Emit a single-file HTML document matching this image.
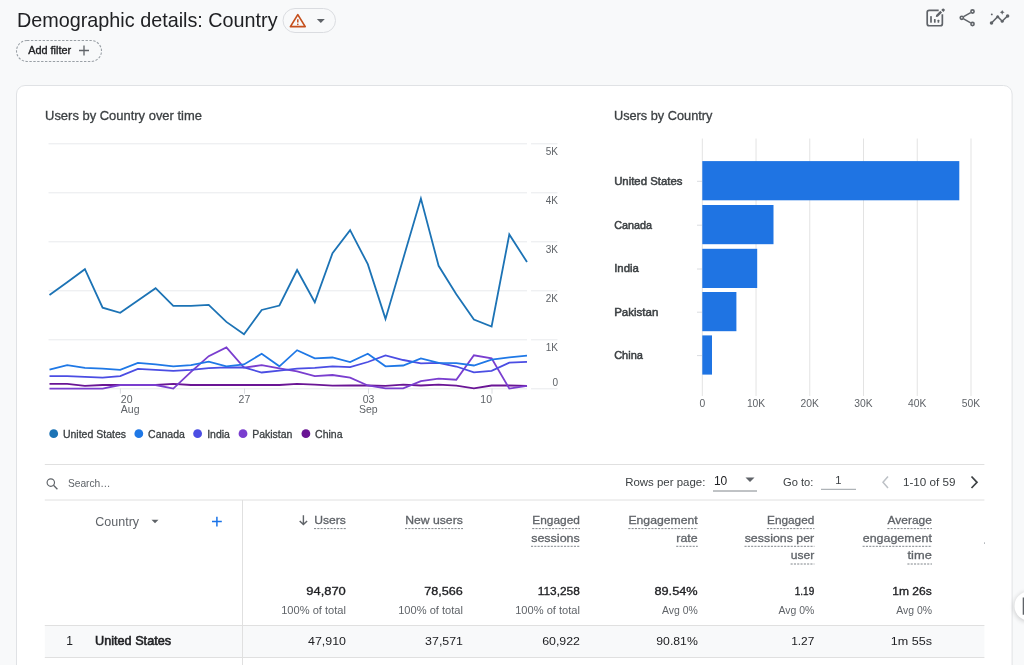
<!DOCTYPE html>
<html><head><meta charset="utf-8"><style>
html,body{margin:0;padding:0;width:1024px;height:665px;overflow:hidden;background:#f8f9fa;}
svg{display:block;font-family:"Liberation Sans",sans-serif;will-change:transform;}
</style></head><body>
<svg width="1024" height="665" viewBox="0 0 1024 665" font-family="Liberation Sans, sans-serif">
<rect x="16.5" y="85.5" width="995.6" height="620" rx="8.5" fill="#fff" stroke="#e0e2e5"/>
<text x="17.00" y="27.30" font-size="19.8" fill="#202124">Demographic details: Country</text>
<rect x="283" y="8.5" width="52.5" height="24" rx="12" fill="none" stroke="#dadce0"/>
<path d="M297.8 14.6 L305.2 26.6 L290.4 26.6 Z" fill="none" stroke="#c5501e" stroke-width="1.7" stroke-linejoin="round"/>
<path d="M297.8 19.2 V22.6" stroke="#c5501e" stroke-width="1.5"/><circle cx="297.8" cy="24.4" r="0.8" fill="#c5501e"/>
<path d="M316.8 19 H324.8 L320.8 23 Z" fill="#5f6368"/>
<rect x="16.5" y="40.5" width="85" height="21" rx="10.5" fill="none" stroke="#9aa0a6" stroke-width="1.1" stroke-dasharray="2.4 1.5"/>
<text x="28.18" y="54.20" font-size="10.6" fill="#202124" stroke="#202124" stroke-width="0.35" textLength="42.95" lengthAdjust="spacingAndGlyphs">Add filter</text>
<path d="M79 50.5 H89 M84 45.5 V55.5" stroke="#5f6368" stroke-width="1.3"/>
<g fill="none" stroke="#5f6368" stroke-width="1.7"><path d="M938.7 10.35 H929.2 A2 2 0 0 0 927.2 12.35 V23.75 A2 2 0 0 0 929.2 25.75 H940.35 A2 2 0 0 0 942.35 23.75 V14.2"/></g><g fill="#5f6368"><rect x="930.15" y="16.1" width="1.7" height="6.6" rx="0.4"/><rect x="933.95" y="18.9" width="1.7" height="3.8" rx="0.4"/><rect x="937.55" y="19.8" width="1.7" height="2.9" rx="0.4"/></g><path d="M935.8 17.1 L936.15 15.05 L940.35 10.85 L942.05 12.55 L937.85 16.75 Z M941.25 9.95 L942.45 8.75 Q943.2 8.1 943.95 8.75 L944.55 9.35 Q945.2 10.1 944.55 10.85 L943.35 12.05 Z" fill="#5f6368"/>
<g fill="none" stroke="#5f6368"><path d="M963.6 16.7 L970.7 12.6 M963.6 18.9 L970.7 22.9" stroke-width="1.5"/><circle cx="961.8" cy="17.8" r="1.6" stroke-width="1.6"/><circle cx="972.5" cy="11.5" r="1.6" stroke-width="1.6"/><circle cx="972.5" cy="24" r="1.6" stroke-width="1.6"/></g>
<g fill="#5f6368"><path d="M991.5 23 L997.7 16.65 L1002.2 21.2 L1007.6 15.9" fill="none" stroke="#5f6368" stroke-width="1.5"/><circle cx="991.5" cy="23" r="1.75"/><circle cx="997.7" cy="16.65" r="1.5"/><circle cx="1002.2" cy="21.2" r="1.5"/><circle cx="1007.6" cy="15.9" r="1.75"/><path d="M1002.2 9.9 Q1002.6 11.9 1004.6 12.3 Q1002.6 12.7 1002.2 14.7 Q1001.8 12.7 999.8 12.3 Q1001.8 11.9 1002.2 9.9 Z"/><circle cx="991.8" cy="14.4" r="0.95"/></g>
<text x="45.05" y="119.70" font-size="13" fill="#3c4043" stroke="#3c4043" stroke-width="0.3" textLength="156.90" lengthAdjust="spacingAndGlyphs">Users by Country over time</text>
<text x="613.95" y="119.60" font-size="13" fill="#3c4043" stroke="#3c4043" stroke-width="0.3" textLength="98.50" lengthAdjust="spacingAndGlyphs">Users by Country</text>
<path d="M48.5 143.80 H527 M531 143.80 H557.5" stroke="#e8eaed" stroke-width="1"/>
<text x="558.00" y="154.60" font-size="10" fill="#5f6368" text-anchor="end">5K</text>
<path d="M48.5 192.80 H527 M531 192.80 H557.5" stroke="#e8eaed" stroke-width="1"/>
<text x="558.00" y="203.60" font-size="10" fill="#5f6368" text-anchor="end">4K</text>
<path d="M48.5 241.80 H527 M531 241.80 H557.5" stroke="#e8eaed" stroke-width="1"/>
<text x="558.00" y="252.60" font-size="10" fill="#5f6368" text-anchor="end">3K</text>
<path d="M48.5 290.80 H527 M531 290.80 H557.5" stroke="#e8eaed" stroke-width="1"/>
<text x="558.00" y="301.60" font-size="10" fill="#5f6368" text-anchor="end">2K</text>
<path d="M48.5 339.80 H527 M531 339.80 H557.5" stroke="#e8eaed" stroke-width="1"/>
<text x="558.00" y="350.60" font-size="10" fill="#5f6368" text-anchor="end">1K</text>
<path d="M48.5 388.80 H527 M531 388.80 H557.5" stroke="#e8eaed" stroke-width="1"/>
<text x="558.00" y="385.50" font-size="10" fill="#5f6368" text-anchor="end">0</text>
<path d="M120.4 388.5 V393.7" stroke="#dadce0"/>
<path d="M244.5 388.5 V393.7" stroke="#dadce0"/>
<path d="M368.5 388.5 V393.7" stroke="#dadce0"/>
<path d="M492 388.5 V393.7" stroke="#dadce0"/>
<text x="120.80" y="402.90" font-size="10.5" fill="#5f6368">20</text>
<text x="120.80" y="413.40" font-size="10.5" fill="#5f6368">Aug</text>
<text x="244.40" y="402.90" font-size="10.5" fill="#5f6368" text-anchor="middle">27</text>
<text x="368.50" y="402.90" font-size="10.5" fill="#5f6368" text-anchor="middle">03</text>
<text x="368.30" y="413.40" font-size="10.5" fill="#5f6368" text-anchor="middle">Sep</text>
<text x="492.00" y="402.90" font-size="10.5" fill="#5f6368" text-anchor="end">10</text>
<polyline points="49.5,383.9 67.2,383.9 84.9,385.8 102.6,385.0 120.2,385.0 137.9,385.0 155.6,385.0 173.3,383.9 191.0,385.0 208.7,385.0 226.4,385.0 244.0,385.0 261.7,385.0 279.4,385.0 297.1,383.9 314.8,384.7 332.5,385.6 350.1,385.5 367.8,385.5 385.5,385.8 403.2,384.7 420.9,385.5 438.6,384.7 456.3,385.7 473.9,388.4 491.6,385.5 509.3,385.5 527.0,385.8" fill="none" stroke="#6a1595" stroke-width="1.8" stroke-miterlimit="8"/>
<polyline points="49.5,388.6 67.2,388.6 84.9,388.6 102.6,388.6 120.2,385.0 137.9,385.0 155.6,385.0 173.3,388.6 191.0,371.9 208.7,356.2 226.4,347.4 244.0,367.6 261.7,365.2 279.4,368.3 297.1,371.3 314.8,376.1 332.5,375.0 350.1,377.6 367.8,385.5 385.5,388.4 403.2,388.4 420.9,381.1 438.6,378.6 456.3,379.7 473.9,355.3 491.6,358.4 509.3,388.6 527.0,385.8" fill="none" stroke="#7a3ecf" stroke-width="1.8" stroke-miterlimit="8"/>
<polyline points="49.5,376.1 67.2,376.1 84.9,376.9 102.6,377.7 120.2,376.1 137.9,368.9 155.6,369.8 173.3,370.9 191.0,369.8 208.7,368.1 226.4,367.3 244.0,367.5 261.7,372.5 279.4,370.6 297.1,368.6 314.8,367.8 332.5,366.3 350.1,367.1 367.8,362.0 385.5,355.4 403.2,360.0 420.9,363.4 438.6,362.8 456.3,366.5 473.9,372.3 491.6,370.8 509.3,362.6 527.0,361.8" fill="none" stroke="#4b4de3" stroke-width="1.8" stroke-miterlimit="8"/>
<polyline points="49.5,369.7 67.2,365.2 84.9,367.8 102.6,368.6 120.2,369.8 137.9,362.8 155.6,364.4 173.3,366.3 191.0,365.2 208.7,361.6 226.4,366.3 244.0,364.4 261.7,353.8 279.4,366.3 297.1,350.2 314.8,358.4 332.5,357.5 350.1,362.0 367.8,353.8 385.5,366.3 403.2,365.5 420.9,358.4 438.6,362.8 456.3,363.1 473.9,365.5 491.6,359.7 509.3,357.3 527.0,355.6" fill="none" stroke="#1f78e6" stroke-width="1.8" stroke-miterlimit="8"/>
<polyline points="49.5,295.1 67.2,282.2 84.9,269.2 102.6,307.7 120.2,312.8 137.9,300.5 155.6,288.2 173.3,305.8 191.0,305.8 208.7,304.9 226.4,321.9 244.0,334.3 261.7,310.0 279.4,305.5 297.1,270.0 314.8,302.2 332.5,253.2 350.1,230.1 367.8,264.2 385.5,318.9 403.2,258.7 420.9,198.5 438.6,265.8 456.3,294.3 473.9,319.5 491.6,326.5 509.3,234.5 527.0,262.0" fill="none" stroke="#1c73b5" stroke-width="1.8" stroke-miterlimit="8"/>
<circle cx="53.7" cy="433.7" r="4.4" fill="#1c73b5"/>
<text x="62.95" y="437.90" font-size="10.5" fill="#3c4043" stroke="#3c4043" stroke-width="0.3">United States</text>
<circle cx="138.8" cy="433.7" r="4.4" fill="#1f78e6"/>
<text x="148.05" y="437.90" font-size="10.5" fill="#3c4043" stroke="#3c4043" stroke-width="0.3">Canada</text>
<circle cx="197.6" cy="433.7" r="4.4" fill="#4b4de3"/>
<text x="207.15" y="437.90" font-size="10.5" fill="#3c4043" stroke="#3c4043" stroke-width="0.3">India</text>
<circle cx="243" cy="433.7" r="4.4" fill="#7a3ecf"/>
<text x="252.15" y="437.90" font-size="10.5" fill="#3c4043" stroke="#3c4043" stroke-width="0.3">Pakistan</text>
<circle cx="305.9" cy="433.7" r="4.4" fill="#6a1595"/>
<text x="315.05" y="437.90" font-size="10.5" fill="#3c4043" stroke="#3c4043" stroke-width="0.3">China</text>
<path d="M702.30 138.5 V396" stroke="#e3e3e3"/>
<text x="702.30" y="407.00" font-size="10.3" fill="#5f6368" text-anchor="middle">0</text>
<path d="M756.04 138.5 V396" stroke="#e3e3e3"/>
<text x="756.04" y="407.00" font-size="10.3" fill="#5f6368" text-anchor="middle">10K</text>
<path d="M809.78 138.5 V396" stroke="#e3e3e3"/>
<text x="809.78" y="407.00" font-size="10.3" fill="#5f6368" text-anchor="middle">20K</text>
<path d="M863.52 138.5 V396" stroke="#e3e3e3"/>
<text x="863.52" y="407.00" font-size="10.3" fill="#5f6368" text-anchor="middle">30K</text>
<path d="M917.26 138.5 V396" stroke="#e3e3e3"/>
<text x="917.26" y="407.00" font-size="10.3" fill="#5f6368" text-anchor="middle">40K</text>
<path d="M971.00 138.5 V396" stroke="#e3e3e3"/>
<text x="971.00" y="407.00" font-size="10.3" fill="#5f6368" text-anchor="middle">50K</text>
<rect x="702.3" y="161.1" width="257.0" height="39.2" fill="#1f74e3"/>
<path d="M697 181.3 H702" stroke="#dadce0"/>
<text x="614.15" y="185.00" font-size="11.3" fill="#3c4043" stroke="#3c4043" stroke-width="0.5" textLength="68.30" lengthAdjust="spacingAndGlyphs">United States</text>
<rect x="702.3" y="205" width="71.2" height="39.2" fill="#1f74e3"/>
<path d="M697 225.2 H702" stroke="#dadce0"/>
<text x="614.15" y="228.55" font-size="11.3" fill="#3c4043" stroke="#3c4043" stroke-width="0.5" textLength="37.80" lengthAdjust="spacingAndGlyphs">Canada</text>
<rect x="702.3" y="248.8" width="54.9" height="39.2" fill="#1f74e3"/>
<path d="M697 269.0 H702" stroke="#dadce0"/>
<text x="614.15" y="272.10" font-size="11.3" fill="#3c4043" stroke="#3c4043" stroke-width="0.5" textLength="24.70" lengthAdjust="spacingAndGlyphs">India</text>
<rect x="702.3" y="292" width="34.1" height="39.2" fill="#1f74e3"/>
<path d="M697 312.2 H702" stroke="#dadce0"/>
<text x="614.15" y="315.65" font-size="11.3" fill="#3c4043" stroke="#3c4043" stroke-width="0.5" textLength="44.20" lengthAdjust="spacingAndGlyphs">Pakistan</text>
<rect x="702.3" y="335.4" width="9.7" height="39.2" fill="#1f74e3"/>
<path d="M697 355.6 H702" stroke="#dadce0"/>
<text x="614.15" y="359.20" font-size="11.3" fill="#3c4043" stroke="#3c4043" stroke-width="0.5" textLength="28.80" lengthAdjust="spacingAndGlyphs">China</text>
<path d="M44.8 464.5 H984.4 M44.8 500 H984.4" stroke="#e0e0e0"/>
<circle cx="50.8" cy="482.6" r="3.7" fill="none" stroke="#5f6368" stroke-width="1.15"/><path d="M53.5 485.3 L57.4 489.2" stroke="#5f6368" stroke-width="1.3"/>
<text x="67.90" y="487.20" font-size="11.5" fill="#5f6368" textLength="42.60" lengthAdjust="spacingAndGlyphs">Search…</text>
<text x="625.20" y="486.30" font-size="11.5" fill="#3c4043" textLength="80.20" lengthAdjust="spacingAndGlyphs">Rows per page:</text>
<text x="713.90" y="485.00" font-size="12" fill="#202124">10</text>
<path d="M713 491 H757" stroke="#80868b"/><path d="M745.5 477.5 H754.5 L750 482 Z" fill="#5f6368"/>
<text x="783.00" y="486.30" font-size="11.5" fill="#3c4043" textLength="30.40" lengthAdjust="spacingAndGlyphs">Go to:</text>
<path d="M821 489.3 H856" stroke="#9aa0a6"/>
<text x="838.40" y="484.40" font-size="11.2" fill="#3c4043" text-anchor="middle">1</text>
<path d="M888 476.5 L883 482.3 L888 488" fill="none" stroke="#bdc1c6" stroke-width="1.5"/>
<text x="903.00" y="486.30" font-size="11.7" fill="#3c4043" textLength="52.50" lengthAdjust="spacingAndGlyphs">1-10 of 59</text>
<path d="M971.5 476.5 L977 482.3 L971.5 488" fill="none" stroke="#3c4043" stroke-width="1.7"/>
<path d="M242.5 500 V665" stroke="#e0e0e0"/>
<text x="95.30" y="526.00" font-size="12.5" fill="#5f6368">Country</text>
<path d="M151.5 519.8 H158.5 L155 523.3 Z" fill="#5f6368"/>
<path d="M212 521.6 H221.8 M216.9 516.7 V526.5" stroke="#1a73e8" stroke-width="1.5"/>
<text x="345.85" y="523.80" font-size="11.7" fill="#5f6368" stroke="#5f6368" stroke-width="0.3" text-anchor="end" textLength="31.70" lengthAdjust="spacingAndGlyphs">Users</text>
<path d="M314.0 528.6 H346.0" stroke="#80868b" stroke-width="1" stroke-dasharray="2.1 1.2"/>
<text x="462.85" y="523.80" font-size="11.7" fill="#5f6368" stroke="#5f6368" stroke-width="0.3" text-anchor="end" textLength="57.70" lengthAdjust="spacingAndGlyphs">New users</text>
<path d="M405.0 528.6 H463.0" stroke="#80868b" stroke-width="1" stroke-dasharray="2.1 1.2"/>
<text x="579.85" y="523.80" font-size="11.7" fill="#5f6368" stroke="#5f6368" stroke-width="0.3" text-anchor="end" textLength="47.50" lengthAdjust="spacingAndGlyphs">Engaged</text>
<path d="M532.2 528.6 H580.0" stroke="#80868b" stroke-width="1" stroke-dasharray="2.1 1.2"/>
<text x="579.85" y="541.50" font-size="11.7" fill="#5f6368" stroke="#5f6368" stroke-width="0.3" text-anchor="end" textLength="48.70" lengthAdjust="spacingAndGlyphs">sessions</text>
<path d="M531.0 546.3 H580.0" stroke="#80868b" stroke-width="1" stroke-dasharray="2.1 1.2"/>
<text x="697.65" y="523.80" font-size="11.7" fill="#5f6368" stroke="#5f6368" stroke-width="0.3" text-anchor="end" textLength="69.20" lengthAdjust="spacingAndGlyphs">Engagement</text>
<path d="M628.3 528.6 H697.8" stroke="#80868b" stroke-width="1" stroke-dasharray="2.1 1.2"/>
<text x="697.65" y="541.50" font-size="11.7" fill="#5f6368" stroke="#5f6368" stroke-width="0.3" text-anchor="end" textLength="21.30" lengthAdjust="spacingAndGlyphs">rate</text>
<path d="M676.2 546.3 H697.8" stroke="#80868b" stroke-width="1" stroke-dasharray="2.1 1.2"/>
<text x="814.25" y="523.80" font-size="11.7" fill="#5f6368" stroke="#5f6368" stroke-width="0.3" text-anchor="end" textLength="47.20" lengthAdjust="spacingAndGlyphs">Engaged</text>
<path d="M766.9 528.6 H814.4" stroke="#80868b" stroke-width="1" stroke-dasharray="2.1 1.2"/>
<text x="814.25" y="541.50" font-size="11.7" fill="#5f6368" stroke="#5f6368" stroke-width="0.3" text-anchor="end" textLength="69.60" lengthAdjust="spacingAndGlyphs">sessions per</text>
<path d="M744.5 546.3 H814.4" stroke="#80868b" stroke-width="1" stroke-dasharray="2.1 1.2"/>
<text x="814.25" y="559.20" font-size="11.7" fill="#5f6368" stroke="#5f6368" stroke-width="0.3" text-anchor="end" textLength="23.50" lengthAdjust="spacingAndGlyphs">user</text>
<path d="M790.6 564.0 H814.4" stroke="#80868b" stroke-width="1" stroke-dasharray="2.1 1.2"/>
<text x="931.85" y="523.80" font-size="11.7" fill="#5f6368" stroke="#5f6368" stroke-width="0.3" text-anchor="end" textLength="44.30" lengthAdjust="spacingAndGlyphs">Average</text>
<path d="M887.4 528.6 H932.0" stroke="#80868b" stroke-width="1" stroke-dasharray="2.1 1.2"/>
<text x="931.85" y="541.50" font-size="11.7" fill="#5f6368" stroke="#5f6368" stroke-width="0.3" text-anchor="end" textLength="69.10" lengthAdjust="spacingAndGlyphs">engagement</text>
<path d="M862.6 546.3 H932.0" stroke="#80868b" stroke-width="1" stroke-dasharray="2.1 1.2"/>
<text x="931.85" y="559.20" font-size="11.7" fill="#5f6368" stroke="#5f6368" stroke-width="0.3" text-anchor="end" textLength="24.30" lengthAdjust="spacingAndGlyphs">time</text>
<path d="M907.4 564.0 H932.0" stroke="#80868b" stroke-width="1" stroke-dasharray="2.1 1.2"/>
<path d="M303.4 515.2 V524.6 M299.7 520.9 L303.4 524.6 L307.1 520.9" fill="none" stroke="#5f6368" stroke-width="1.4"/>
<rect x="44.8" y="625" width="939.6" height="32.5" fill="#f8f9fa"/>
<path d="M44.8 625.5 H984.4 M44.8 657.5 H984.4" stroke="#e0e0e0"/><path d="M242.5 625 V665" stroke="#e0e0e0"/>
<text x="345.84" y="594.80" font-size="11.6" fill="#202124" stroke="#202124" stroke-width="0.32" text-anchor="end" textLength="39.58" lengthAdjust="spacingAndGlyphs">94,870</text>
<text x="346.00" y="613.70" font-size="10.8" fill="#5f6368" text-anchor="end" textLength="64.80" lengthAdjust="spacingAndGlyphs">100% of total</text>
<text x="346.00" y="644.80" font-size="11.2" fill="#202124" text-anchor="end" textLength="38.00" lengthAdjust="spacingAndGlyphs">47,910</text>
<text x="462.84" y="594.80" font-size="11.6" fill="#202124" stroke="#202124" stroke-width="0.32" text-anchor="end" textLength="38.58" lengthAdjust="spacingAndGlyphs">78,566</text>
<text x="463.00" y="613.70" font-size="10.8" fill="#5f6368" text-anchor="end" textLength="64.80" lengthAdjust="spacingAndGlyphs">100% of total</text>
<text x="463.00" y="644.80" font-size="11.2" fill="#202124" text-anchor="end" textLength="37.90" lengthAdjust="spacingAndGlyphs">37,571</text>
<text x="579.84" y="594.80" font-size="11.6" fill="#202124" stroke="#202124" stroke-width="0.32" text-anchor="end" textLength="42.08" lengthAdjust="spacingAndGlyphs">113,258</text>
<text x="580.00" y="613.70" font-size="10.8" fill="#5f6368" text-anchor="end" textLength="64.80" lengthAdjust="spacingAndGlyphs">100% of total</text>
<text x="580.00" y="644.80" font-size="11.2" fill="#202124" text-anchor="end" textLength="37.80" lengthAdjust="spacingAndGlyphs">60,922</text>
<text x="697.64" y="594.80" font-size="11.6" fill="#202124" stroke="#202124" stroke-width="0.32" text-anchor="end" textLength="43.18" lengthAdjust="spacingAndGlyphs">89.54%</text>
<text x="697.80" y="613.70" font-size="10.8" fill="#5f6368" text-anchor="end" textLength="35.80" lengthAdjust="spacingAndGlyphs">Avg 0%</text>
<text x="697.80" y="644.80" font-size="11.2" fill="#202124" text-anchor="end" textLength="41.50" lengthAdjust="spacingAndGlyphs">90.81%</text>
<text x="814.24" y="594.80" font-size="10.6" fill="#202124" stroke="#202124" stroke-width="0.32" text-anchor="end" textLength="19.48" lengthAdjust="spacingAndGlyphs">1.19</text>
<text x="814.40" y="613.70" font-size="10.8" fill="#5f6368" text-anchor="end" textLength="35.80" lengthAdjust="spacingAndGlyphs">Avg 0%</text>
<text x="814.40" y="644.80" font-size="11.2" fill="#202124" text-anchor="end" textLength="23.20" lengthAdjust="spacingAndGlyphs">1.27</text>
<text x="931.84" y="594.80" font-size="11.6" fill="#202124" stroke="#202124" stroke-width="0.32" text-anchor="end" textLength="39.58" lengthAdjust="spacingAndGlyphs">1m 26s</text>
<text x="932.00" y="613.70" font-size="10.8" fill="#5f6368" text-anchor="end" textLength="35.80" lengthAdjust="spacingAndGlyphs">Avg 0%</text>
<text x="932.00" y="644.80" font-size="11.2" fill="#202124" text-anchor="end" textLength="41.20" lengthAdjust="spacingAndGlyphs">1m 55s</text>
<text x="69.50" y="645.00" font-size="12" fill="#202124" text-anchor="middle">1</text>
<text x="94.98" y="645.20" font-size="12.4" fill="#202124" stroke="#202124" stroke-width="0.55" textLength="76.15" lengthAdjust="spacingAndGlyphs">United States</text>
<rect x="984" y="542.4" width="0.9" height="1.4" fill="#9aa0a6"/>
<defs><filter id="sh" x="-50%" y="-50%" width="200%" height="200%"><feGaussianBlur stdDeviation="2.5"/></filter></defs>
<circle cx="1029" cy="607" r="15" fill="#000" opacity="0.18" filter="url(#sh)"/>
<circle cx="1029" cy="606" r="14.5" fill="#fff"/><path d="M1023.6 597.6 V614.7" stroke="#5f6368" stroke-width="1.8"/>
</svg>
</body></html>
